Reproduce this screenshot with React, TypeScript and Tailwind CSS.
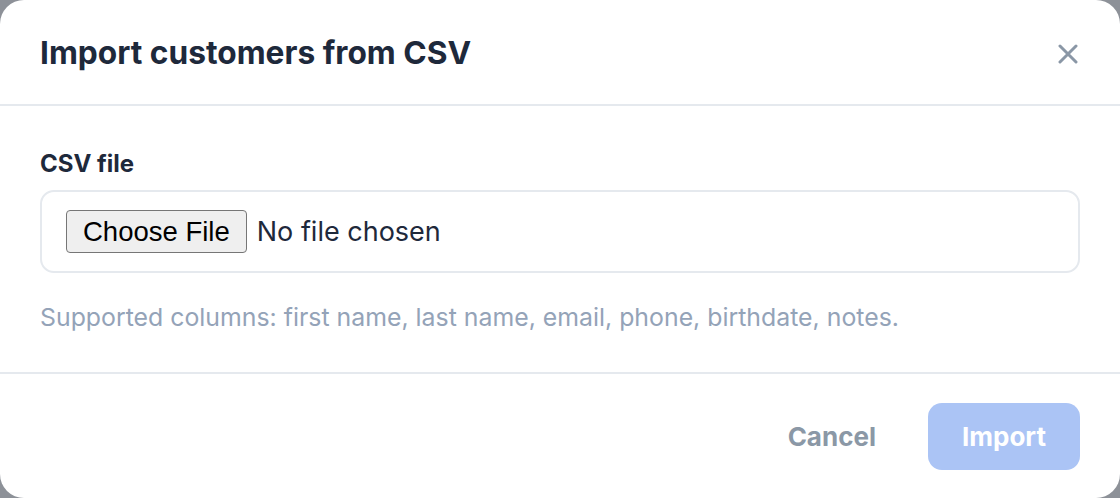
import React from "react";

export default function App() {
  return (
    <div className="w-[1120px] h-[498px] bg-[#8d9198] overflow-hidden" style={{ fontFamily: "Inter, 'Noto Sans', sans-serif" }}>
      <div className="w-full h-full bg-white rounded-[24px] flex flex-col">
        <div className="h-[106px] shrink-0 border-b-2 border-[#e5e9ee] flex items-start justify-between pl-10 pr-[42px] pt-[33px]">
          <h1 className="text-[31.7px] leading-[40px] font-bold text-[#1e293b]">Import customers from CSV</h1>
          <button className="mt-[11px] w-5 h-5 flex items-center justify-center text-[#8a97a6]" aria-label="Close">
            <svg width="20" height="20" viewBox="0 0 20 20" fill="none" stroke="currentColor" strokeWidth="3" strokeLinecap="round">
              <path d="M2 2 L18 18 M18 2 L2 18" />
            </svg>
          </button>
        </div>
        <div className="px-10 pt-[42px] pb-[39px] border-b-2 border-[#e5e9ee]">
          <div className="text-[24px] leading-[32px] font-bold text-[#1e293b]">CSV file</div>
          <div className="mt-[10px] h-[83px] border-2 border-[#e5e9ee] rounded-[14px] px-6 flex items-center">
            <span
              className="h-[43px] px-[16px] flex items-center bg-[#efefef] border border-[#767676] rounded-[4px] text-[27.5px] text-black"
              style={{ fontFamily: "'Liberation Sans', Arial, sans-serif" }}
            >
              Choose File
            </span>
            <span className="ml-[10px] mt-[2px] text-[27px] text-[#1e293b]">No file chosen</span>
          </div>
          <p className="mt-[28px] text-[24.85px] leading-[32px] text-[#94a3b8]">
            Supported columns: first name, last name, email, phone, birthdate, notes.
          </p>
        </div>
        <div className="flex-1 flex items-center justify-end px-10 gap-[52px]">
          <button className="text-[26px] font-bold text-[#8b98a6]">Cancel</button>
          <button className="h-[67px] w-[152px] rounded-[14px] bg-[#abc4f5] text-white text-[26px] font-bold">Import</button>
        </div>
      </div>
    </div>
  );
}
